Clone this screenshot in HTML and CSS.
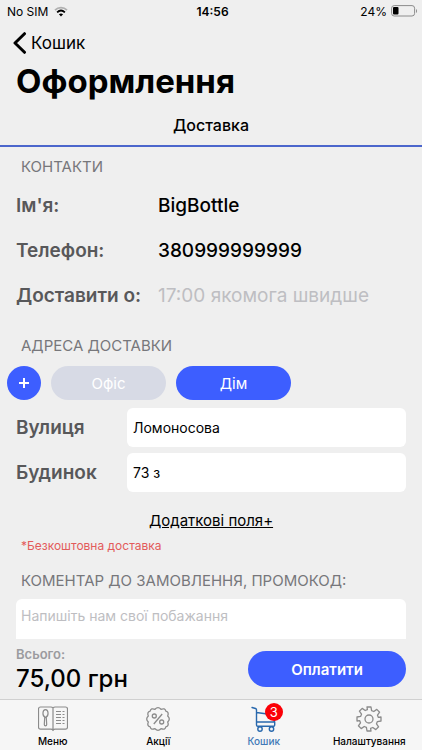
FILE: index.html
```html
<!DOCTYPE html>
<html lang="uk">
<head>
<meta charset="utf-8">
<meta name="viewport" content="width=device-width, initial-scale=1">
<title>Оформлення</title>
<link rel="stylesheet" href="styles.css">
</head>
<body>
<div class="app">
  <div class="status">
    <div class="carrier">
      <span>No SIM</span>
      <svg width="14" height="11" viewBox="0 0 14 11" aria-hidden="true">
        <path d="M1 4.2C4.4.8 9.6.8 13 4.2" fill="none" stroke="#b0b0b0" stroke-width="1.7"/>
        <path d="M3.1 6.3c2.3-2.1 5.5-2.1 7.8 0" fill="none" stroke="#000" stroke-width="1.8"/>
        <path d="M4.9 8.2c1.3-1.1 2.9-1.1 4.2 0L7 10.4z"/>
      </svg>
    </div>
    <div class="clock">14:56</div>
    <div class="power">
      <span>24%</span>
      <svg width="27" height="12" viewBox="0 0 27 12" aria-hidden="true">
        <rect x=".6" y=".6" width="23" height="10.4" rx="2.6" fill="none" stroke="#8c8c8c"/>
        <rect x="2" y="2" width="5.5" height="7.6" rx="1"/>
        <path d="M25 4v4c1.4-.6 1.4-3.4 0-4z" fill="#8c8c8c"/>
      </svg>
    </div>
  </div>

  <header>
    <a class="back" href="#">
      <svg width="14" height="22" viewBox="0 0 14 22" aria-hidden="true"><path d="M11.5 1.7 2 11l9.5 9.3" fill="none" stroke="#000" stroke-width="3" stroke-linecap="round" stroke-linejoin="round"/></svg>
      <span>Кошик</span>
    </a>
    <h1>Оформлення</h1>
    <div class="tab">Доставка</div>
  </header>

  <main>
    <h2>КОНТАКТИ</h2>
    <div class="row contact"><label for="name">Ім'я:</label><input id="name" type="text" value="BigBottle"></div>
    <div class="row contact"><label for="phone">Телефон:</label><input id="phone" type="tel" value="380999999999"></div>
    <div class="row contact"><label for="time">Доставити о:</label><input id="time" type="text" placeholder="17:00 якомога швидше"></div>

    <h2 class="address">АДРЕСА ДОСТАВКИ</h2>
    <div class="places">
      <button class="add" type="button" aria-label="Додати адресу"><svg width="10" height="10" viewBox="0 0 10 10" aria-hidden="true"><path d="M5 0v10M0 5h10" stroke="#fff" stroke-width="2"/></svg></button>
      <button class="place" type="button">Офіс</button>
      <button class="place active" type="button">Дім</button>
    </div>
    <div class="row field"><label for="street">Вулиця</label><input id="street" type="text" value="Ломоносова"></div>
    <div class="row field"><label for="house">Будинок</label><input id="house" type="text" value="73 з"></div>
    <a class="more" href="#">Додаткові поля+</a>
    <p class="free">*Безкоштовна доставка</p>
    <h2 class="comment-title"><label for="comment">КОМЕНТАР ДО ЗАМОВЛЕННЯ, ПРОМОКОД:</label></h2>
    <textarea id="comment" placeholder="Напишіть нам свої побажання"></textarea>
  </main>

  <div class="checkout">
    <div class="total"><span class="caption">Всього:</span><span class="sum">75,00 грн</span></div>
    <button class="pay" type="button">Оплатити</button>
  </div>

  <nav>
    <a href="#">
      <svg width="30" height="26" viewBox="0 0 30 26" fill="none" stroke="#8b8b8b" stroke-width="1.2" aria-hidden="true">
        <path d="M15 24.2c-.6-.9-1.3-1-2.2-1H2.5c-1.2 0-2-.8-2-2V3c0-1.2.8-2 2-2h10.3c1 0 1.7.3 2.2 1 .5-.7 1.2-1 2.2-1h10.3c1.2 0 2 .8 2 2v18.2c0 1.2-.8 2-2 2H17.2c-.9 0-1.600.1-2.200 1zM15 2v23"/>
        <path d="M7.500 11.500c-3.800-1.500-3-7.800 0-7.800s3.800 6.300 0 7.800zM6.700 11.500 6.300 18.500c0 1.800 2.400 1.800 2.400 0l-.4-7"/>
        <path d="M18 5.500h5M24.500 5.500h2M18 8.500h5M24.500 8.500h2M18 11.500h5M24.500 11.500h2M18 14.500h5M24.500 14.500h2M18 17.500h5M24.500 17.500h2"/>
      </svg>
      <span>Меню</span>
    </a>
    <a href="#">
      <svg width="26" height="26" viewBox="0 0 26 26" fill="none" stroke="#8b8b8b" stroke-width="1.3" stroke-linejoin="round" aria-hidden="true">
        <path d="M10 3.300Q13 .1 16 3.300Q20 1.700 20.800 5.200Q24.300 6 22.700 10Q25.900 13 22.700 16Q24.300 20 20.800 20.800Q20 24.300 16 22.700Q13 25.900 10 22.700Q6 24.300 5.200 20.800Q1.700 20 3.300 16Q.1 13 3.300 10Q1.700 6 5.200 5.200Q6 1.700 10 3.300z"/>
        <path d="m17.200 8-8.400 10"/><circle cx="9.300" cy="10" r="2"/><circle cx="16.700" cy="16" r="2"/>
      </svg>
      <span>Акції</span>
    </a>
    <a class="current" href="#">
      <span class="cart">
        <svg width="26" height="26" viewBox="0 0 26 26" fill="none" stroke="#2868ad" stroke-width="1.4" stroke-linecap="round" stroke-linejoin="round" aria-hidden="true">
          <path d="M1 1.500 4.500 2.500c.7.200 1 .6 1 1.300V19c0 .9.500 1.300 1.300 1.300H22.500c.8 0 1.200-.4 1.200-1.200V16M5.500 6.500 23.700 9V14.500c0 1-.5 1.500-1.500 1.500H5.500"/>
          <circle cx="9" cy="23" r="2.200"/><circle cx="20.500" cy="23" r="2.200"/>
        </svg>
        <span class="badge">3</span>
      </span>
      <span>Кошик</span>
    </a>
    <a href="#">
      <svg width="26" height="26" viewBox="0 0 26 26" fill="none" stroke="#8b8b8b" stroke-width="1.3" stroke-linejoin="round" aria-hidden="true">
        <path d="M11 1h4l.6 3.600 2.200.9 3-2.100 2.800 2.800-2.100 3 .9 2.200L25 11v4l-3.600.6-.9 2.200 2.100 3-2.800 2.800-3-2.100-2.200.9L15 25h-4l-.6-3.600-2.200-.9-3 2.100-2.800-2.800 2.100-3-.9-2.200L1 15v-4l3.600-.6.9-2.200-2.100-3 2.800-2.800 3 2.100 2.200-.9z"/>
        <circle cx="13" cy="13" r="4"/>
      </svg>
      <span>Налаштування</span>
    </a>
  </nav>
</div>
</body>
</html>
```
FILE: styles.css
```css
* { box-sizing: border-box; }
body {
  margin: 0;
  background: #efefef;
  color: #000;
  font-family: Inter, "Liberation Sans", sans-serif;
}
h1, h2, p { margin: 0; }
a { color: inherit; text-decoration: none; }
button, input, textarea { font: inherit; border: 0; }
button { padding: 0; color: #fff; }
.app { min-height: 100vh; display: flex; flex-direction: column; }

.status {
  display: grid;
  grid-template-columns: 1fr auto 1fr;
  align-items: center;
  height: 22px;
  padding: 0 4px 0 7px;
  font-size: 12px;
}
.carrier, .power { display: flex; align-items: center; gap: 6px; }
.power { justify-content: flex-end; gap: 4px; }
.clock { font-weight: 600; }

header { border-bottom: 2px solid #4c66cc; }
.back { display: flex; align-items: center; gap: 4px; height: 42px; padding-left: 13px; font-size: 17px; }
h1 { padding-left: 16px; font-size: 33px; font-weight: 700; line-height: 34px; }
.tab { padding: 15px 0 8px; text-align: center; font-size: 16px; font-weight: 500; line-height: 24px; }

main { padding: 10px 16px 0; }
h2 { padding-left: 5px; color: #77777b; font-size: 15px; font-weight: 400; line-height: 20px; }
.row { display: flex; align-items: center; }
.row label { color: #58585a; font-size: 19px; font-weight: 600; }
.row input { flex: 1; min-width: 0; padding: 0; background: none; }
.contact { height: 45px; }
.contact:first-of-type { margin-top: 6px; }
.contact label { width: 142px; }
.contact input { font-size: 19px; font-weight: 500; }
::placeholder { color: #bebec2; font-weight: 400; opacity: 1; }
.address { margin-top: 18px; }
.places { display: flex; gap: 10px; margin: 10px 0 8px -9px; }
.places button { height: 34px; border-radius: 17px; background: #3d5eff; }
.places .add { display: grid; place-items: center; width: 34px; }
.places .place { width: 115px; background: #d7dae5; font-size: 15px; }
.places .active { background: #3d5eff; }
.field { margin-bottom: 6px; }
.field label { width: 111px; }
.row.field input { height: 39px; padding: 0 6px; border-radius: 6px; background: #fff; font-size: 14px; }
.more { display: block; width: fit-content; margin: 19px auto 7px; font-size: 15px; line-height: 20px; text-decoration: underline; }
.free { padding-left: 5px; color: #e35b5b; font-size: 12px; line-height: 16px; }
.comment-title { margin: 17px 0 8px; }
textarea {
  display: block;
  width: 100%;
  height: 40px;
  padding: 8px 5px;
  border-radius: 6px 6px 0 0;
  background: #fff;
  font-size: 14px;
  line-height: 18px;
  resize: none;
}

.checkout {
  display: flex;
  align-items: center;
  justify-content: space-between;
  height: 60px;
  margin-top: auto;
  padding: 0 16px;
}
.total { display: flex; flex-direction: column; }
.caption { color: #9b9b9f; font-size: 13px; font-weight: 600; line-height: 20px; }
.sum { font-size: 24px; font-weight: 500; line-height: 30px; }
.pay { width: 158px; height: 36px; border-radius: 18px; background: #3d5eff; font-size: 15px; font-weight: 600; }

nav {
  display: grid;
  grid-template-columns: repeat(4, 1fr);
  height: 51px;
  border-top: 1px solid #d0d0d0;
  background: #f6f6f6;
}
nav a { display: flex; flex-direction: column; align-items: center; gap: 2px; padding-top: 6px; font-size: 10px; font-weight: 500; line-height: 14px; }
nav svg { display: block; }
.current { color: #4179b7; }
.cart { position: relative; }
.badge {
  position: absolute;
  top: -3px;
  right: -6px;
  width: 18px;
  height: 18px;
  border-radius: 9px;
  background: #fb0007;
  color: #fff;
  font-size: 13px;
  font-weight: 400;
  line-height: 18px;
  text-align: center;
}
```
